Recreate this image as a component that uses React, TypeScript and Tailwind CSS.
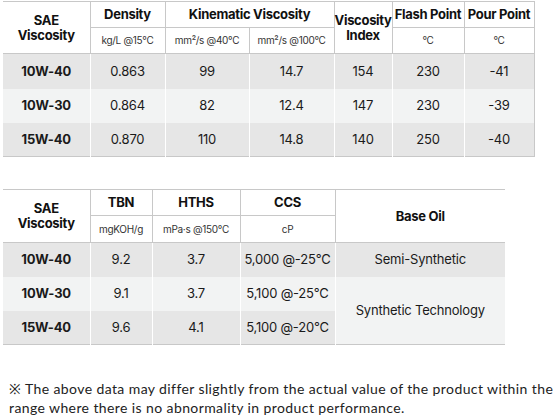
import React from "react";

const hd = "border border-[#c8c8c8] bg-white text-center font-bold text-[13px] leading-[15px] text-[#111] tracking-[-0.3px] p-0";
const un = "border border-[#c8c8c8] bg-white text-center text-[10px] text-[#333] tracking-[-0.3px] p-0";
const bd = "border-x border-white text-center text-[13px] text-[#1a1a1a] tracking-[-0.2px] p-0";

const rows1 = [
  ["10W-40", "0.863", "99", "14.7", "154", "230", "-41"],
  ["10W-30", "0.864", "82", "12.4", "147", "230", "-39"],
  ["15W-40", "0.870", "110", "14.8", "140", "250", "-40"],
];
const bgs = ["bg-[#e6e6e6]", "bg-[#f2f3f3]", "bg-[#e6e6e6]"];
const hts = ["h-[35px]", "h-[34px]", "h-[34px]"];

export default function App() {
  return (
    <div className="w-[560px] h-[420px] bg-white font-['Inter',sans-serif] relative overflow-hidden">
      <div className="pt-[1px] pl-[3px]">
        <table className="border-collapse table-fixed w-[531px] border-t border-b border-[#c8c8c8]">
          <colgroup>
            <col className="w-[87px]" />
            <col className="w-[75px]" />
            <col className="w-[84px]" />
            <col className="w-[85px]" />
            <col className="w-[58px]" />
            <col className="w-[72px]" />
            <col className="w-[70px]" />
          </colgroup>
          <thead>
            <tr className="h-[26px]">
              <th rowSpan={2} className={hd + " border-l-0"}>SAE<br />Viscosity</th>
              <th className={hd}>Density</th>
              <th colSpan={2} className={hd}>Kinematic Viscosity</th>
              <th rowSpan={2} className={hd}>Viscosity<br />Index</th>
              <th className={hd}>Flash Point</th>
              <th className={hd}>Pour Point</th>
            </tr>
            <tr className="h-[26px]">
              <td className={un}>kg/L @15°C</td>
              <td className={un}>mm²/s @40°C</td>
              <td className={un}>mm²/s @100°C</td>
              <td className={un}>°C</td>
              <td className={un}>°C</td>
            </tr>
          </thead>
          <tbody>
            {rows1.map((r, i) => (
              <tr key={i} className={bgs[i] + " " + hts[i]}>
                {r.map((c, j) => (
                  <td key={j} className={bd + (j === 0 ? " font-bold border-l-0" : "") + (j === 6 ? " border-r-[#c8c8c8]" : "")}>{c}</td>
                ))}
              </tr>
            ))}
          </tbody>
        </table>
      </div>

      <div className="pt-[32px] pl-[3px]">
        <table className="border-collapse table-fixed w-[502px] border-t border-b border-[#c8c8c8]">
          <colgroup>
            <col className="w-[87px]" />
            <col className="w-[62px]" />
            <col className="w-[88px]" />
            <col className="w-[95px]" />
            <col className="w-[170px]" />
          </colgroup>
          <thead>
            <tr className="h-[26px]">
              <th rowSpan={2} className={hd + " border-l-0"}>SAE<br />Viscosity</th>
              <th className={hd}>TBN</th>
              <th className={hd}>HTHS</th>
              <th className={hd}>CCS</th>
              <th rowSpan={2} className={hd + " border-r-0"}>Base Oil</th>
            </tr>
            <tr className="h-[27px]">
              <td className={un}>mgKOH/g</td>
              <td className={un}>mPa·s @150°C</td>
              <td className={un}>cP</td>
            </tr>
          </thead>
          <tbody>
            <tr className="bg-[#e6e6e6] h-[34px]">
              <td className={bd + " font-bold border-l-0"}>10W-40</td>
              <td className={bd}>9.2</td>
              <td className={bd}>3.7</td>
              <td className={bd}>5,000 @-25°C</td>
              <td className={bd + " border-r-0"}>Semi-Synthetic</td>
            </tr>
            <tr className="bg-[#f2f3f3] h-[34px]">
              <td className={bd + " font-bold border-l-0"}>10W-30</td>
              <td className={bd}>9.1</td>
              <td className={bd}>3.7</td>
              <td className={bd}>5,100 @-25°C</td>
              <td rowSpan={2} className={bd + " border-r-0 bg-[#f2f3f3]"}>Synthetic Technology</td>
            </tr>
            <tr className="bg-[#e6e6e6] h-[34px]">
              <td className={bd + " font-bold border-l-0"}>15W-40</td>
              <td className={bd}>9.6</td>
              <td className={bd}>4.1</td>
              <td className={bd}>5,100 @-20°C</td>
            </tr>
          </tbody>
        </table>
      </div>

      <div className="pt-[34px] pl-[9px] pr-[2px] font-['Lato',sans-serif] text-[14px] leading-[19px] tracking-[0.4px] text-[#222]">
        ※ The above data may differ slightly from the actual value of the product within the range where there is no abnormality in product performance.
      </div>
    </div>
  );
}
